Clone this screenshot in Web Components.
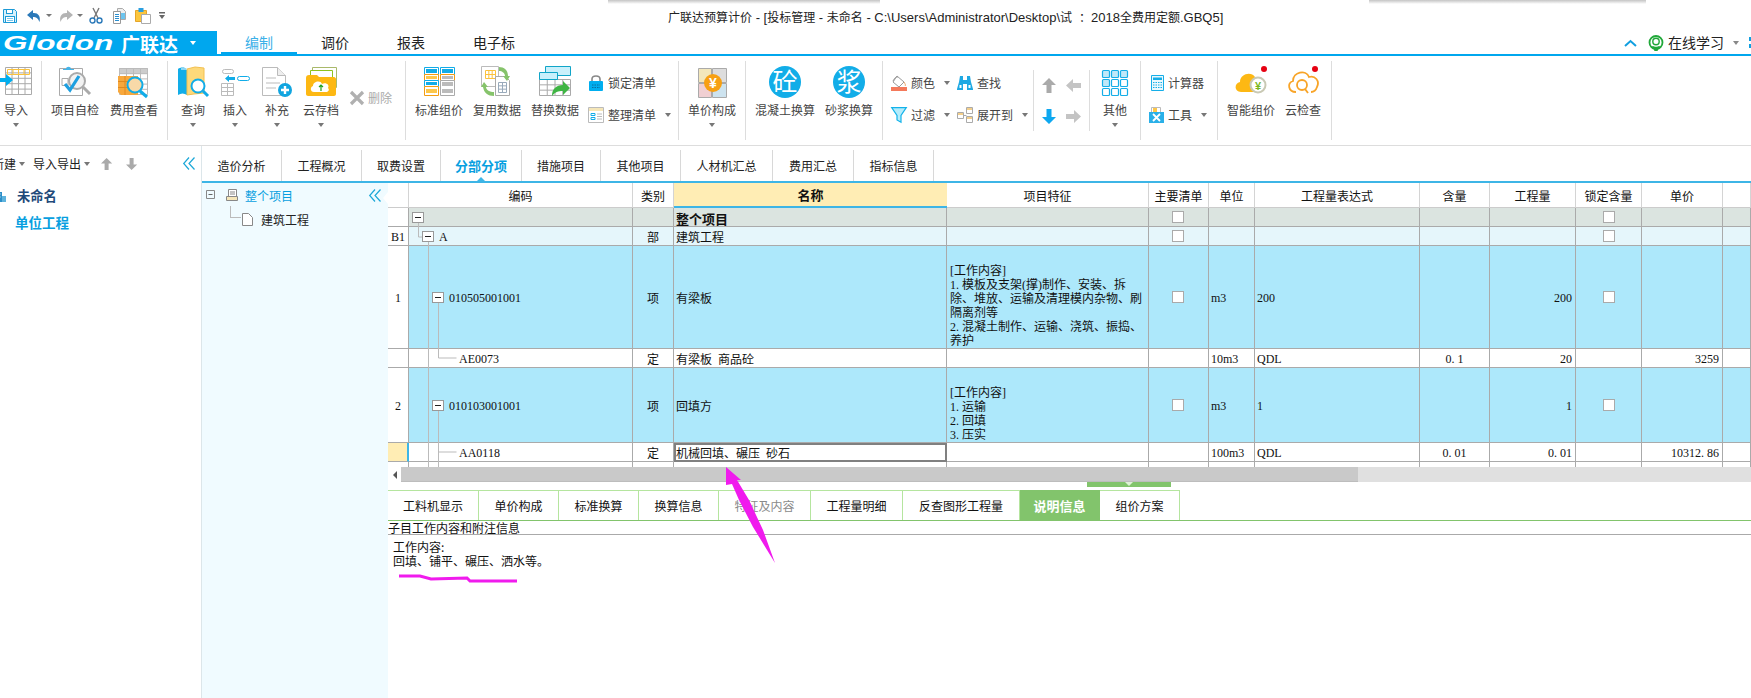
<!DOCTYPE html>
<html lang="zh-CN">
<head>
<meta charset="utf-8">
<title>广联达预算计价</title>
<style>
  html, body { margin: 0; background: #fff; }
  body { font: 12px "Liberation Sans", "Noto Sans CJK SC", sans-serif; color: #222; overflow: hidden; }
</style>
</head>
<body>
<app-shell></app-shell>

<script>
const BLUE = "#00a7ee";
const LINE_BLUE = "#3db5e6";
const SERIF = `"Liberation Serif", "Noto Sans CJK SC", serif`;

// grid of thin lines, used by most of the table icons
function gridLines(x, y, w, h, nx, ny, color) {
  let d = `M${x} ${y}h${w}v${h}h-${w}z`;
  for (let i = 1; i < nx; i++) d += `M${x + (w * i) / nx} ${y}v${h}`;
  for (let i = 1; i < ny; i++) d += `M${x} ${y + (h * i) / ny}h${w}`;
  return `<path d="${d}" fill="none" stroke="${color}"/>`;
}

const FIXED = `font-family="Liberation Sans, sans-serif" font-weight="700" text-anchor="middle"`;

const ICONS = {
  save: [16, 16, `<path d="M1.500 1.500h11l2 2v11h-13z" fill="#d6f0fb" stroke="#1c9ad6"/><rect x="4.500" y="1.500" width="6" height="4" fill="#fff" stroke="#1c9ad6"/><rect x="3.500" y="8.500" width="9" height="6" fill="#fff" stroke="#1c9ad6"/><path d="M5 10.500h6M5 12.500h6" stroke="#7cc6ea"/>`],
  undo: [14, 14, `<path d="M6 1L0 6l6 5V8c3 0 5 1 6.500 5C14 7 11 3.500 6 4z" fill="#2b79b9"/>`],
  redo: [14, 14, `<path d="M8 1l6 5-6 5V8C5 8 3 9 1.500 13 0 7 3 3.500 8 4z" fill="#b4b4b4"/>`],
  cut: [14, 16, `<path d="M4 0l5 10M10 0L5 10" stroke="#777" stroke-width="1.400" fill="none"/><circle cx="3.500" cy="12.500" r="2.500" fill="#fff" stroke="#2b79b9" stroke-width="1.400"/><circle cx="10.500" cy="12.500" r="2.500" fill="#fff" stroke="#2b79b9" stroke-width="1.400"/>`],
  copy: [16, 16, `<path d="M5.500 .5h5l3 3v8h-8z" fill="#eee" stroke="#aaa"/><path d="M1.500 3.500h7v12h-7z" fill="#fff" stroke="#999"/><path d="M3 6.500h4M3 8.500h4M3 10.500h4M3 12.500h4" stroke="#2b8fd0"/><path d="M9 5h4v6H9z" fill="#6cc4ee"/>`],
  paste: [16, 17, `<path d="M.5 3.500h11v11H.5z" fill="#fcc63d" stroke="#e5a52a"/><rect x="3.500" y="1" width="5" height="4" fill="#2b9fe0"/><path d="M6.500 7.500h9v9h-9z" fill="#fff" stroke="#aaa"/>`],
  customize: [6, 8, `<path d="M0 0h6v1.500H0zM0 3h6L3 7z" fill="#666"/>`],

  import: [32, 32, gridLines(5.5, 1.5, 26, 27, 4, 5, "#aaa") + gridLines(7.5, 3.5, 22, 5, 4, 1, "#fbc23d") + `<path d="M0 10h6V6l7 6-7 6v-4H0z" fill="#00aeef" transform="translate(0 2)"/>`],
  check: [32, 32, `<path d="M.5 2.500h23v27H.5z" fill="#fff" stroke="#aaa"/><path d="M7 3c0-3 5-3 5 0h3v1H4V3z" fill="#45b4e8"/><path d="M3 12.500h6v7H3z" fill="none" stroke="#aaa"/><circle cx="18" cy="15" r="8" fill="#f2f2f2" stroke="#aaa" stroke-width="2"/><path d="M24 21l7 7" stroke="#aaa" stroke-width="3"/><path d="M6 18l5 6 9-14" fill="none" stroke="#1d9fe0" stroke-width="3.200"/>`],
  costview: [32, 32, `<rect x="1" y="2" width="29" height="6" fill="#ccc"/>` + gridLines(1.5, 2.5, 28, 26, 4, 5, "#bbb") + `<path d="M0 10h20v19H3l-3-3z" fill="#f8a83c"/><path d="M0 15.500h20M0 21.500h20M7 10v19" stroke="#e08a20"/><circle cx="17" cy="19" r="7.500" fill="#f8d9a8" stroke="#11ace8" stroke-width="2"/><path d="M22 25l7 6" stroke="#11ace8" stroke-width="3"/>`],
  query: [32, 32, `<path d="M1 3c2-2 7-2 9 0v26c-3-2-6-2-9 0z" fill="#12ade8"/><path d="M10 3l8-2 9 1v25l-10 1-7 1z" fill="#fdd97a" stroke="#f3c04f"/><path d="M4 3h6" stroke="#fff"/><circle cx="21" cy="20" r="6.500" fill="#fff" stroke="#11ace8" stroke-width="2"/><path d="M26 25l5 5" stroke="#11ace8" stroke-width="3"/>`],
  insert: [32, 32, `<rect x="3.500" y="3.500" width="11" height="4" rx="2" fill="#fff" stroke="#bbb"/><rect x="18.500" y="10.500" width="12" height="4" rx="2" fill="#fff" stroke="#11ace8"/><path d="M6 12.500l4-3.500v2h6v3h-6v2z" fill="#11ace8"/>` + gridLines(2.5, 17.5, 12, 12, 2, 3, "#bbb")],
  supply: [32, 32, `<path d="M1.500 1.500h15l8 8v20h-23z" fill="#fff" stroke="#bbb"/><path d="M16.500 1.500v8h8" fill="#eee" stroke="#bbb"/><path d="M5 12h10M5 17h14M5 22h10" stroke="#ddd" stroke-width="2"/><circle cx="24" cy="24" r="7" fill="#11a5e0"/><path d="M20 24h8M24 20v8" stroke="#fff" stroke-width="2.400"/>`],
  cloudsave: [32, 32, `<path d="M7.500 1.500h24v20h-24z" fill="#fff" stroke="#a9b96a"/><path d="M5.500 4.500h22v20h-22z" fill="#fff" stroke="#8fc31f"/><path d="M1 12c0-2 1-3 3-3h8l2 2h15c1 0 2 1 2 2v15c0 1-1 2-2 2H3c-1 0-2-1-2-2z" fill="#fdb813"/><path d="M9 26c-4 0-4-5-1-6 0-5 8-6 9-2 4-2 8 1 6 4 2 2 0 4-2 4z" fill="#fff"/><path d="M16 19v6M14 21l2-2 2 2" fill="none" stroke="#22a022" stroke-width="1.200"/>`],
  remove: [14, 14, `<path d="M1 1l12 12M13 1L1 13" stroke="#b0b0b0" stroke-width="3.200"/>`],
  standard: [32, 32, `<path d="M1.500 1.500h14v7h-14z" fill="#fff" stroke="#11ace8"/><rect x="3" y="3" width="11" height="4" fill="#11ace8"/><path d="M1.500 8.500h14v6h-14z" fill="#fff" stroke="#f39c12"/><rect x="3" y="10" width="11" height="3" fill="#fdc74a"/><path d="M1.500 14.500h14v6h-14z" fill="#fff" stroke="#11ace8"/><rect x="3" y="16" width="11" height="3" fill="#11ace8"/><path d="M1.500 20.500h14v9h-14z" fill="#fff" stroke="#f39c12"/><rect x="3" y="23" width="11" height="4" fill="#fdc74a"/><path d="M17.500 1.500h14v7h-14z" fill="#fff" stroke="#11ace8"/><rect x="19" y="3" width="11" height="4" fill="#11ace8"/><path d="M17.500 8.500h14v6h-14z" fill="#fff" stroke="#f39c12"/><rect x="19" y="10" width="11" height="3" fill="#bbb"/><path d="M17.500 14.500h14v15h-14z" fill="#fff" stroke="#aaa"/><rect x="19" y="16" width="11" height="4" fill="#bbb"/><rect x="19" y="23" width="11" height="4" fill="#bbb"/>`],
  reuse: [32, 32, `<path d="M.5 .5h17v20H.5z" fill="#fff" stroke="#bbb"/>` + gridLines(4.5, 4.5, 10, 8, 3, 2, "#fbc23d") + `<path d="M14.500 10.500h10l4 4v15h-14z" fill="#fff" stroke="#aaa"/>` + gridLines(17.5, 16.5, 8, 10, 2, 3, "#9ab") + `<path d="M18 1c5 0 9 3 9 9h2l-3 5-4-5h2c0-3-3-5-6-5z" fill="#86c36b"/><path d="M13 30c-6 0-10-3-11-9H0l3-5 4 5H5c0 3 4 5 8 5z" fill="#86c36b"/>`],
  replace: [32, 32, gridLines(.5, 13.5, 31, 16, 4, 3, "#aaa") + `<path d="M6.500 .5h25v9h-25z" fill="#c9f0fb" stroke="#11a5c8"/><path d="M.5 6.500h18v7H.5z" fill="#c9f0fb" stroke="#11a5c8"/><path d="M13 30c0-7 4-11 11-11v-4l7 7-7 7v-4c-5 0-8 1-11 5z" fill="#3fb544"/>`],
  lock: [16, 16, `<path d="M4 7V4c0-4 8-4 8 0v3" fill="none" stroke="#888" stroke-width="1.600"/><rect x="1" y="6" width="14" height="10" rx="1" fill="#00aeef"/><path d="M4 10h8M4 12.500h8" stroke="#0a6f9e" stroke-dasharray="1.500 1"/>`],
  tidy: [16, 16, `<path d="M.5 .5h15v15H.5z" fill="#fff" stroke="#bbb"/><rect x="1" y="1" width="14" height="3" fill="#f5e6b8"/><path d="M3 6.500h4v2H3zM3 10.500h4v2H3z" fill="#fff" stroke="#11ace8"/><path d="M9 7h5M9 9.500h5M9 12h5" stroke="#bbb"/>`],
  unitprice: [32, 32, `<path d="M2.500 2.500h13v14h-13z" fill="#f3e7bb" stroke="#aaa"/><path d="M16.500 2.500h14v14h-14z" fill="#ddd" stroke="#aaa"/><path d="M2.500 17.500h13v14h-13z" fill="#f0cfd2" stroke="#aaa"/><path d="M16.500 17.500h14v14h-14z" fill="#cde3ef" stroke="#aaa"/><circle cx="17" cy="17" r="9" fill="#f7a012"/><text x="17" y="22" font-size="14" fill="#fff" ${FIXED}>¥</text>`],
  concrete: [32, 32, `<circle cx="16" cy="16" r="16" fill="#12ade8"/><text x="16" y="25" font-size="25" fill="#fff" text-anchor="middle" font-family="Noto Sans CJK SC, sans-serif">砼</text>`],
  mortar: [32, 32, `<circle cx="16" cy="16" r="16" fill="#12ade8"/><text x="16" y="25" font-size="25" fill="#fff" text-anchor="middle" font-family="Noto Sans CJK SC, sans-serif">浆</text>`],
  color: [16, 16, `<path d="M6 1l7 6-5 5-6-5z" fill="#fff" stroke="#999"/><path d="M2 6c2-4 3-4 5-4" fill="none" stroke="#999"/><path d="M13 7c1 2 2 3 1 4" fill="none" stroke="#e8a060"/><rect y="12" width="16" height="4" fill="#f4795b"/>`],
  find: [16, 16, `<path d="M3 1h3v4h4V1h3l1 6 2 7v1h-6V9H6v6H0v-1l2-7z" fill="#1fa9e3"/><path d="M2.500 10h2v3h-2zM11.500 10h2v3h-2z" fill="#fff"/>`],
  filter: [16, 16, `<path d="M.7 .7h14.600L10 8.500V15.300L6 13V8.500z" fill="#b5ecfb" stroke="#13b2ea" stroke-width="1.200"/>`],
  expand: [16, 16, `<path d="M.5 5.500h6v6h-6zM9.500 .5h6v6h-6zM9.500 9.500h6v6h-6z" fill="#fff" stroke="#aaa"/><path d="M1 6h5v2H1zM10 1h5v2h-5zM10 10h5v2h-5z" fill="#f3cf8c"/><path d="M6.500 8.500h3" stroke="#aaa"/>`],
  up: [14, 15, `<path d="M7 0l7 7H9.500v8h-5V7H0z" fill="#aaa"/>`],
  down: [14, 15, `<path d="M7 15L0 8h4.500V0h5v8H14z" fill="#0ea8f0"/>`],
  left: [15, 13, `<path d="M0 6.500L7 0v4h8v5H7v4z" fill="#c4c4c4"/>`],
  right: [15, 13, `<path d="M15 6.500L8 0v4H0v5h8v4z" fill="#c4c4c4"/>`],
  other: [32, 32, [0, 1, 2].map((r) => [0, 1, 2].map((c) => `<rect x="${3.5 + c * 9}" y="${4.5 + r * 9}" width="7" height="7" rx="1" fill="${r === 0 || (r === 1 && c === 0) ? "#bfe8f8" : "#fff"}" stroke="#15aee8" stroke-width="1.200"/>`).join("")).join("")],
  calc: [16, 16, `<path d="M3.500 .5h12v15h-12z" fill="#eaf8fd" stroke="#15aee8"/><rect x="5" y="2.500" width="9" height="2.500" fill="#15aee8"/><path d="M5 7.500h9M5 10h9M5 12.500h9" stroke="#15aee8" stroke-dasharray="1.500 1"/>`],
  tool: [16, 16, `<path d="M3.500 .5h9v6h-9z" fill="#fff" stroke="#bbb"/><rect x="5" y="1" width="4" height="4" fill="#fdc74a"/><rect x="1" y="5" width="15" height="11" fill="#2ab0e8"/><path d="M5 7l7 7M12 7l-7 7" stroke="#fff" stroke-width="1.800"/>`],
  smart: [32, 32, `<path d="M6 26c-7 0-7-9-1-10 0-8 11-11 15-5 2 0 4 1 5 2v13z" fill="#fdb813"/><circle cx="23" cy="19" r="7.500" fill="#fff" stroke="#c9c9b4" stroke-width="2"/><text x="23" y="23.500" font-size="11" fill="#7cb81e" ${FIXED}>¥</text><circle cx="29" cy="3" r="3" fill="#e60012"/>`],
  cloudcheck: [32, 32, `<path d="M9 26c-8 0-9-9-3-11 0-9 13-12 16-4 6-2 11 4 8 10-1 3-3 5-6 5" fill="none" stroke="#f8a428" stroke-width="1.800"/><circle cx="15" cy="19" r="5" fill="#fff" stroke="#f8a428" stroke-width="1.800"/><path d="M18 23l3 4" stroke="#f8a428" stroke-width="1.800"/><circle cx="28" cy="3" r="3" fill="#e60012"/>`],
  headset: [16, 16, `<circle cx="8" cy="7.500" r="6.500" fill="none" stroke="#21a83a" stroke-width="1.800"/><circle cx="8" cy="6.500" r="3.200" fill="#fff" stroke="#21a83a" stroke-width="1.400"/><path d="M3 12c2 3 8 3 10 0l-2-1c-1 1-5 1-6 0z" fill="#21a83a"/><rect x="6" y="13" width="4" height="3" rx="1" fill="#21a83a"/>`],
  chevup: [11, 6, `<path d="M0 6l5.500-5L11 6" fill="none" stroke="#119fe0" stroke-width="2"/>`],
  collapse: [12, 13, `<path d="M6 .5L.7 6.500 6 12.500M11.500 .5L6 6.500l5.500 6" fill="none" stroke="#1da8d8" stroke-width="1.200"/>`],
  doc: [11, 13, `<path d="M.5 .5h6l4 4v8H.5z" fill="#fff" stroke="#888"/>`],
  pages: [12, 12, `<path d="M2.500 .5h8v10h-8z" fill="#fff" stroke="#888"/><path d="M.5 7.500h11v4H.5z" fill="#f5e6b8" stroke="#888"/><path d="M4 3h5M4 5h5" stroke="#888"/>`],
  building: [12, 13, `<path d="M0 3h7v10H0z" fill="#2b8fc9"/><path d="M1 5h1.500M4 5h1.500M1 8h1.500M4 8h1.500" stroke="#fff"/><path d="M7 7h4v6H7z" fill="#5fb3dd"/>`],
  minibox: [10, 10, `<path d="M.5 .5h8v8H.5z" fill="none" stroke="#888"/><path d="M2.500 4.500h4" stroke="#666"/>`],
};

class GlIcon extends HTMLElement {
  connectedCallback() {
    const [w, h, body] = ICONS[this.getAttribute("name")];
    const scale = this.getAttribute("scale") || 1;
    this.attachShadow({ mode: "open" }).innerHTML = `
      <style>:host { display: block; flex: none; line-height: 0; } svg { overflow: visible; }</style>
      <svg width="${w * scale}" height="${h * scale}" viewBox="0 0 ${w} ${h}">${body}</svg>`;
  }
}
customElements.define("gl-icon", GlIcon);

class TitleBar extends HTMLElement {
  constructor() {
    super();
    const items = [["save", 2], ["undo", 9], ["dd", 5], ["redo", 7], ["dd", 4], ["cut", 6], ["copy", 9], ["paste", 7], ["customize", 8]];
    const title = "广联达预算计价 - [投标管理 - 未命名 - C:\\Users\\Administrator\\Desktop\\试：2018全费用定额.GBQ5]";
    const marked = title.replace(/[\x20-\x7e]+/g, "<span>$&</span>").replace("：", "<b>：</b>");
    this.attachShadow({ mode: "open" }).innerHTML = `
      <style>
        :host { display: flex; height: 31px; align-items: center; background: #fff; }
        .quick { display: flex; align-items: center; width: 668px; height: 27px; }
        .dd { width: 0; height: 0; border: 3px solid transparent; border-top: 3px solid #777; border-bottom: 0; }
        .title { font: 12px "Liberation Sans", "Noto Sans CJK SC", sans-serif; color: #222; padding-top: 1px; white-space: pre; }
        .title span { font-size: 13px; }
        .title b { font-weight: 400; padding-left: 7px; }
      </style>
      <div class="quick">${items.map(([n, m]) => n === "dd"
        ? `<span class="dd" style="margin-left:${m}px"></span>`
        : `<gl-icon name="${n}" style="margin-left:${m}px"></gl-icon>`).join("")}</div>
      <div class="title">${marked}</div>`;
  }
}
customElements.define("title-bar", TitleBar);

class MenuBar extends HTMLElement {
  constructor() {
    super();
    const tabs = [["编制", 76], ["调价", 76], ["报表", 76], ["电子标", 90]];
    this.attachShadow({ mode: "open" }).innerHTML = `
      <style>
        :host { display: flex; height: 25px; box-sizing: border-box; border-bottom: 2px solid ${BLUE}; font: 14px "Noto Sans CJK SC", sans-serif; color: #222; }
        .logo { width: 217px; background: ${BLUE}; display: flex; align-items: center; color: #fff; margin-right: 4px; height: 24px; }
        .g { font: italic 700 21px "Liberation Sans", sans-serif; width: 121px; padding-left: 3px; box-sizing: border-box; }
        .g span { display: inline-block; transform: scaleX(1.5); transform-origin: 0 50%; }
        .cn { font: 700 19px/23px "Noto Sans CJK SC", sans-serif; width: 69px; white-space: nowrap; }
        .tri { width: 0; height: 0; border: 3px solid transparent; border-top: 4px solid #fff; border-bottom: 0; }
        .tab { text-align: center; line-height: 23px; box-sizing: border-box; }
        .tab.on { color: #3bb0e8; border-bottom: 2px solid ${BLUE}; }
        .right { margin-left: auto; display: flex; align-items: center; width: 126px; flex: none; }
        .learn { margin-left: 4px; white-space: nowrap; line-height: 23px; }
        .dd { width: 0; height: 0; border: 3px solid transparent; border-top: 4px solid #888; border-bottom: 0; margin-left: 9px; }
        .sq { width: 3px; height: 11px; margin-left: 10px; background: linear-gradient(#119fe0 0 4px, #fff 4px 7px, #119fe0 7px); flex: none; }
      </style>
      <div class="logo"><div class="g"><span>Glodon</span></div><div class="cn">广联达</div><span class="tri"></span></div>
      ${tabs.map(([t, w], i) => `<div class="tab ${i === 0 ? "on" : ""}" style="width:${w}px">${t}</div>`).join("")}
      <div class="right">
        <gl-icon name="chevup"></gl-icon>
        <gl-icon name="headset" style="margin-left:12px"></gl-icon>
        <span class="learn">在线学习</span><span class="dd"></span><span class="sq"></span>
      </div>`;
  }
}
customElements.define("menu-bar", MenuBar);

class RibbonBar extends HTMLElement {
  constructor() {
    super();
    this.attachShadow({ mode: "open" }).innerHTML = `
      <style>:host { display: flex; height: 90px; box-sizing: border-box; border-bottom: 1px solid #ddd; background: #fff; }</style>
      <slot></slot>`;
  }
}
customElements.define("ribbon-bar", RibbonBar);

class RbGroup extends HTMLElement {
  constructor() {
    super();
    this.attachShadow({ mode: "open" }).innerHTML = `
      <style>
        :host { display: flex; flex: none; box-sizing: border-box; height: 79px; margin-top: 5px; padding-top: 5px; border-right: 1px solid #ddd; align-items: flex-start; }
      </style>
      <slot></slot>`;
  }
}
customElements.define("rb-group", RbGroup);

class RbBig extends HTMLElement {
  connectedCallback() {
    const arrow = this.hasAttribute("arrow");
    this.attachShadow({ mode: "open" }).innerHTML = `
      <style>
        :host { display: flex; flex: none; flex-direction: column; align-items: center; width: ${this.getAttribute("w") || 58}px; color: #444; font: 12px "Noto Sans CJK SC", sans-serif; }
        .ic { height: 32px; width: 32px; }
        .lb { line-height: 16px; margin-top: 4px; white-space: nowrap; }
        .dd { width: 0; height: 0; border: 3px solid transparent; border-top: 4px solid #777; border-bottom: 0; margin-top: 5px; }
      </style>
      <div class="ic"><slot></slot></div>
      <div class="lb">${this.getAttribute("label")}</div>
      ${arrow ? `<span class="dd"></span>` : ""}`;
  }
}
customElements.define("rb-big", RbBig);

class RbSmall extends HTMLElement {
  connectedCallback() {
    const off = this.hasAttribute("disabled");
    this.attachShadow({ mode: "open" }).innerHTML = `
      <style>
        :host { display: flex; flex: none; align-items: center; height: 32px; color: ${off ? "#aaa" : "#444"}; font: 12px "Noto Sans CJK SC", sans-serif; }
        .ic { width: ${this.getAttribute("iw") || 16}px; margin-right: 4px; flex: none; }
        .lb { white-space: nowrap; margin-top: -2px; }
        .dd { width: 0; height: 0; border: 3px solid transparent; border-top: 4px solid #777; border-bottom: 0; margin-left: 9px; }
      </style>
      <div class="ic"><slot></slot></div>
      <span class="lb">${this.getAttribute("label")}</span>
      ${this.hasAttribute("arrow") ? `<span class="dd"></span>` : ""}`;
  }
}
customElements.define("rb-small", RbSmall);

class RbCol extends HTMLElement {
  constructor() {
    super();
    this.attachShadow({ mode: "open" }).innerHTML = `
      <style>:host { display: flex; flex: none; flex-direction: column; margin-top: 1px; box-sizing: border-box; }</style>
      <slot></slot>`;
  }
}
customElements.define("rb-col", RbCol);

class RbNudge extends HTMLElement {
  constructor() {
    super();
    this.attachShadow({ mode: "open" }).innerHTML = `
      <style>
        :host { display: grid; flex: none; grid-template-columns: 24px 15px; grid-template-rows: 31px 31px; width: 57px; height: 61px; margin-top: 4px; box-sizing: border-box; padding-left: 8px; border-left: 1px solid #ddd; border-right: 1px solid #ddd; align-items: center; }
      </style>
      <slot></slot>`;
  }
}
customElements.define("rb-nudge", RbNudge);

class LeftPane extends HTMLElement {
  constructor() {
    super();
    this.attachShadow({ mode: "open" }).innerHTML = `
      <style>
        :host { display: block; width: 202px; flex: none; box-sizing: border-box; border-right: 1px solid #dce6ea; font: 12px "Noto Sans CJK SC", sans-serif; color: #222; overflow: hidden; }
        .bar { display: flex; align-items: center; height: 35px; white-space: nowrap; margin-left: -8px; }
        .dd { width: 0; height: 0; border: 3px solid transparent; border-top: 4px solid #777; border-bottom: 0; margin: 0 0 0 3px; }
        .mid { margin-left: 8px; }
        .tree { font-weight: 700; }
        .proj { display: flex; align-items: center; height: 22px; margin-top: 3px; color: #1f4a7a; font-size: 13.300px; }
        .proj span { margin-left: 10px; letter-spacing: -.1px; }
        .unit { height: 22px; line-height: 22px; margin-top: 5px; padding-left: 15px; color: #089fe0; font-size: 13.500px; }
      </style>
      <div class="bar">
        <span>新建</span><span class="dd"></span><span class="mid">导入导出</span><span class="dd"></span>
        <gl-icon name="up" scale=".8" style="margin-left:11px"></gl-icon>
        <gl-icon name="up" scale=".8" style="margin-left:14px;transform:rotate(180deg)"></gl-icon>
        <gl-icon name="collapse" style="margin-left:46px"></gl-icon>
      </div>
      <div class="tree">
        <div class="proj"><gl-icon name="building" style="margin-left:-5px"></gl-icon><span>未命名</span></div>
        <div class="unit">单位工程</div>
      </div>`;
  }
}
customElements.define("left-pane", LeftPane);

class TabStrip extends HTMLElement {
  constructor() {
    super();
    const tabs = [["造价分析", 80], ["工程概况", 80], ["取费设置", 79], ["分部分项", 81], ["措施项目", 79], ["其他项目", 80], ["人材机汇总", 92], ["费用汇总", 81], ["指标信息", 80]];
    this.attachShadow({ mode: "open" }).innerHTML = `
      <style>
        :host { display: flex; height: 37px; box-sizing: border-box; border-bottom: 2px solid ${LINE_BLUE}; align-items: flex-end; font: 12px "Noto Sans CJK SC", sans-serif; color: #222; }
        .t { height: 31px; line-height: 31px; text-align: center; box-sizing: border-box; border-right: 1px solid #d8d8d8; position: relative; white-space: nowrap; }
        .t.on { color: #089fe0; font-weight: 700; font-size: 13px; }
        .t.on::after { content: ""; position: absolute; left: 50%; bottom: 0; margin-left: -4px; border: 4px solid transparent; border-bottom: 4px solid ${LINE_BLUE}; border-top: 0; }
      </style>
      ${tabs.map(([t, w]) => `<div class="t ${t === "分部分项" ? "on" : ""}" style="width:${w}px">${t}</div>`).join("")}`;
  }
}
customElements.define("tab-strip", TabStrip);

class ProjectTree extends HTMLElement {
  constructor() {
    super();
    this.attachShadow({ mode: "open" }).innerHTML = `
      <style>
        :host { display: block; position: relative; width: 186px; flex: none; background: #f0fbff; font: 12px "Noto Sans CJK SC", sans-serif; color: #222; box-sizing: border-box; }
        .r { display: flex; align-items: center; height: 24px; }
        .root { color: #089fe0; margin-left: 7px; }
        .kid { margin-left: 8px; }
        .elbow { width: 10px; height: 11px; margin: -14px 0 0 28px; border-left: 1px solid #bbb; border-bottom: 1px solid #bbb; flex: none; }
        .notch { position: absolute; right: 0; top: 9px; width: 0; height: 0; border: 6px solid transparent; border-right: 5px solid #fff; border-left: 0; }
      </style>
      <div class="r">
        <gl-icon name="minibox" style="margin-left:4px"></gl-icon>
        <gl-icon name="pages" style="margin-left:10px"></gl-icon>
        <span class="root">整个项目</span>
        <gl-icon name="collapse" style="margin-left:76px"></gl-icon>
      </div>
      <div class="r">
        <span class="elbow"></span>
        <gl-icon name="doc" style="margin-left:1px"></gl-icon>
        <span class="kid">建筑工程</span>
      </div>
      <span class="notch"></span>`;
  }
}
customElements.define("project-tree", ProjectTree);

// column widths and row colours come from the measured screenshot
const COLS = [21, 224, 41, 273, 202, 60, 46, 165, 70, 86, 66, 81, 28];
const HEAD = ["", "编码", "类别", "名称", "项目特征", "主要清单", "单位", "工程量表达式", "含量", "工程量", "锁定含量", "单价", ""];
const WIDE = (s) => s.replace(/\./g, "<i>.</i>");
const FEAT1 = ["[工作内容]", "1.模板及支架(撑)制作、安装、拆", "除、堆放、运输及清理模内杂物、刷", "隔离剂等", "2.混凝土制作、运输、浇筑、振捣、", "养护"];
const FEAT2 = ["[工作内容]", "1.运输", "2.回填", "3.压实"];
const ROWS = [
  { h: 19, bg: "#dbe4e0", box: 3, chk: true, name: "<b>整个项目</b>" },
  { h: 19, bg: "#e5f6fb", no: "B1", box: 13, code: "A", type: "部", name: "建筑工程", chk: true },
  { h: 103, bg: "#ade8fb", no: "1", box: 23, code: "010505001001", type: "项", name: "有梁板", feat: FEAT1, chk: true, unit: "m3", expr: "200", qty: "200" },
  { h: 19, bg: "#fff", leaf: true, code: "AE0073", type: "定", name: "有梁板 商品砼", unit: "10m3", expr: "QDL", ratio: "0.1", qty: "20", price: "3259" },
  { h: 75, bg: "#ade8fb", no: "2", box: 23, code: "010103001001", type: "项", name: "回填方", feat: FEAT2, chk: true, unit: "m3", expr: "1", qty: "1" },
  { h: 19, bg: "#fff", leaf: true, active: true, code: "AA0118", type: "定", name: "机械回填、碾压 砂石", unit: "100m3", expr: "QDL", ratio: "0.01", qty: "0.01", price: "10312.86" },
];

class DataGrid extends HTMLElement {
  constructor() {
    super();
    const chk = (on, extra) => (on ? `<span class="chk" style="${extra || ""}"></span>` : "");
    const head = HEAD.map((t, i) => `<div class="hd ${i === 3 ? "sel" : ""}">${t}</div>`).join("");
    const body = ROWS.map((r) => {
      const cell = (cls, html, css) => `<div class="c ${cls}" style="background:${r.bg};${css || ""}">${html || ""}</div>`;
      const code = r.leaf
        ? `<span style="padding-left:50px">${r.code}</span>`
        : `<span class="box" style="margin-left:${r.box}px"></span><span class="tx">${r.code || ""}</span>`;
      return [
        cell("mid", r.no, r.active ? `background:#ffedb4;border-right:2px solid ${LINE_BLUE}` : "background:#fff"),
        cell("", code),
        cell("mid", r.type),
        cell(`name ${r.active ? "act" : ""}`, r.name),
        cell("feat", r.feat ? `<div>${r.feat.map(WIDE).join("<br>")}</div>` : ""),
        cell("mid", chk(r.chk, "margin-right:2px")),
        cell("pad", r.unit),
        cell("pad", r.expr),
        cell("mid", WIDE(r.ratio || "")),
        cell("rt", WIDE(r.qty || "")),
        cell("mid", chk(r.chk)),
        cell("rt", WIDE(r.price || "")),
        cell("", ""),
      ].join("");
    }).join("");
    const tail = COLS.map(() => `<div class="c tail"></div>`).join("");
    const rows = [25, ...ROWS.map((r) => r.h), 5].map((h) => h + "px").join(" ");
    // tree connectors, coordinates are local to the grid
    const lines = "M30.500 40v14h4M40.500 59V284M50.500 120v55h18M50.500 228v56M50.500 269h18";
    this.attachShadow({ mode: "open" }).innerHTML = `
      <style>
        :host { display: grid; position: relative; grid-template-columns: ${COLS.map((c) => c + "px").join(" ")}; grid-template-rows: ${rows}; font: 12px ${SERIF}; color: #111; background: #fff; }
        .hd { display: flex; align-items: center; justify-content: center; box-sizing: border-box; border-right: 1px solid #d4d4d4; border-bottom: 1px solid #ccc; font-family: "Noto Sans CJK SC", sans-serif; white-space: nowrap; }
        .hd.sel { background: #ffedb4; font-weight: 700; font-size: 13px; border-bottom: 2px solid ${LINE_BLUE}; border-right: 0; }
        .c { display: flex; align-items: center; box-sizing: border-box; padding-top: 2px; border-right: 1px solid #aaa; border-bottom: 1px solid #aaa; white-space: nowrap; overflow: hidden; min-width: 0; }
        .c.tail { background: #fff; border-bottom: 0; padding: 0; }
        .mid { justify-content: center; }
        .rt { justify-content: flex-end; padding-right: 3px; }
        .pad { padding-left: 2px; }
        .name { padding-left: 2px; word-spacing: 3px; }
        .name.act { outline: 2px solid #808080; outline-offset: -2px; position: relative; }
        .feat { align-items: flex-end; padding-left: 3px; padding-top: 0; line-height: 14px; }
        .chk { width: 12px; height: 12px; margin-top: -2px; box-sizing: border-box; background: #fff; border: 1px solid #aaa; }
        .box { width: 12px; height: 11px; margin-top: -2px; box-sizing: border-box; background: #fff; border: 1px solid #999; position: relative; flex: none; z-index: 1; }
        .box::after { content: ""; position: absolute; left: 2px; right: 2px; top: 4px; height: 1px; background: #222; }
        .tx { margin-left: 5px; }
        b { font-family: "Noto Sans CJK SC", sans-serif; font-size: 13px; }
        i { font-style: normal; letter-spacing: 3px; }
        svg { position: absolute; left: 0; top: 0; pointer-events: none; }
      </style>
      ${head}${body}${tail}
      <svg width="200" height="284"><path d="${lines}" fill="none" stroke="#bbb"/></svg>`;
  }
}
customElements.define("data-grid", DataGrid);

class HScroll extends HTMLElement {
  constructor() {
    super();
    this.attachShadow({ mode: "open" }).innerHTML = `
      <style>
        :host { display: flex; height: 15px; background: #e0e0e0; }
        .btn { width: 13px; background: #fff; display: flex; align-items: center; justify-content: center; }
        .btn i { width: 0; height: 0; border: 4px solid transparent; border-right: 4px solid #555; border-left: 0; }
        .thumb { width: 957px; background: #c9c9c9; border-bottom: 1px solid #bdbdbd; box-sizing: border-box; }
      </style>
      <div class="btn"><i></i></div><div class="thumb"></div>`;
  }
}
customElements.define("h-scroll", HScroll);

class DetailPanel extends HTMLElement {
  constructor() {
    super();
    const tabs = [["工料机显示", 91], ["单价构成", 80], ["标准换算", 80], ["换算信息", 80], ["特征及内容", 92], ["工程量明细", 92], ["反查图形工程量", 117], ["说明信息", 80], ["组价方案", 80]];
    this.attachShadow({ mode: "open" }).innerHTML = `
      <style>
        :host { display: block; font: 12px "Noto Sans CJK SC", sans-serif; color: #111; }
        .grip { height: 8px; padding-left: 699px; }
        .grip div { width: 84px; height: 5px; background: #82c46c; display: flex; justify-content: center; }
        .grip i { width: 0; height: 0; border: 4px solid transparent; border-top: 4px solid #dff2d6; border-bottom: 0; }
        .tabs { display: flex; height: 31px; box-sizing: border-box; border-bottom: 1px solid #82c46c; }
        .t { text-align: center; line-height: 30px; box-sizing: border-box; border-top: 1px solid #b5e59f; border-right: 1px solid #b5e59f; white-space: nowrap; }
        .t.off { color: #8a8a8a; }
        .t.on { background: #82c46c; color: #fff; font-weight: 700; font-size: 13px; border-color: #82c46c; }
        .cap { height: 14px; line-height: 13px; box-sizing: border-box; border-bottom: 1px solid #aaa; white-space: nowrap; }
        .txt { padding: 5px 0 0 5px; line-height: 14px; }
      </style>
      <div class="grip"><div><i></i></div></div>
      <div class="tabs">${tabs.map(([t, w]) => `<div class="t ${t === "说明信息" ? "on" : t === "特征及内容" ? "off" : ""}" style="width:${w}px">${t}</div>`).join("")}</div>
      <div class="cap">子目工作内容和附注信息</div>
      <div class="txt">工作内容:<br>回填、铺平、碾压、洒水等。</div>`;
  }
}
customElements.define("detail-panel", DetailPanel);

class AppShell extends HTMLElement {
  constructor() {
    super();
    this.attachShadow({ mode: "open" }).innerHTML = `
      <style>
        :host { display: flex; flex-direction: column; position: relative; width: 1751px; height: 698px; overflow: hidden; background: #fff; }
        .main { display: flex; flex: 1; min-height: 0; }
        .work { flex: 1; min-width: 0; display: flex; flex-direction: column; }
        .split { display: flex; flex: 1; min-height: 0; }
        .sheet { flex: 1; min-width: 0; display: flex; flex-direction: column; border-left: 1px solid #d0d8da; margin-left: -1px; }
        .ink { position: absolute; left: 0; top: 0; pointer-events: none; }
      </style>
      <title-bar></title-bar>
      <menu-bar></menu-bar>
      <ribbon-bar>
        <rb-group style="width:42px"><rb-big w="32" label="导入" arrow><gl-icon name="import"></gl-icon></rb-big></rb-group>
        <rb-group style="width:126px;padding-left:3.500px">
          <rb-big w="59" label="项目自检"><gl-icon name="check"></gl-icon></rb-big>
          <rb-big w="59" label="费用查看"><gl-icon name="costview"></gl-icon></rb-big>
        </rb-group>
        <rb-group style="width:238px;padding-left:4px">
          <rb-big w="42" label="查询" arrow><gl-icon name="query"></gl-icon></rb-big>
          <rb-big w="42" label="插入" arrow><gl-icon name="insert"></gl-icon></rb-big>
          <rb-big w="42" label="补充" arrow><gl-icon name="supply"></gl-icon></rb-big>
          <rb-big w="46" label="云存档" arrow><gl-icon name="cloudsave"></gl-icon></rb-big>
          <rb-small iw="14" label="删除" disabled style="margin:16px 0 0 6px"><gl-icon name="remove"></gl-icon></rb-small>
        </rb-group>
        <rb-group style="width:273px;padding-left:4px">
          <rb-big label="标准组价"><gl-icon name="standard"></gl-icon></rb-big>
          <rb-big label="复用数据"><gl-icon name="reuse"></gl-icon></rb-big>
          <rb-big label="替换数据"><gl-icon name="replace"></gl-icon></rb-big>
          <rb-col style="margin-left:4px">
            <rb-small label="锁定清单"><gl-icon name="lock"></gl-icon></rb-small>
            <rb-small label="整理清单" arrow><gl-icon name="tidy"></gl-icon></rb-small>
          </rb-col>
        </rb-group>
        <rb-group style="width:67px"><rb-big w="66" label="单价构成" arrow><gl-icon name="unitprice"></gl-icon></rb-big></rb-group>
        <rb-group style="width:137px;padding-left:7px">
          <rb-big w="64" label="混凝土换算"><gl-icon name="concrete"></gl-icon></rb-big>
          <rb-big w="64" label="砂浆换算"><gl-icon name="mortar"></gl-icon></rb-big>
        </rb-group>
        <rb-group style="width:258px;padding-left:8px">
          <rb-col style="width:66px">
            <rb-small label="颜色" arrow><gl-icon name="color"></gl-icon></rb-small>
            <rb-small label="过滤" arrow><gl-icon name="filter"></gl-icon></rb-small>
          </rb-col>
          <rb-col style="width:76px">
            <rb-small label="查找"><gl-icon name="find"></gl-icon></rb-small>
            <rb-small label="展开到" arrow><gl-icon name="expand"></gl-icon></rb-small>
          </rb-col>
          <rb-nudge>
            <gl-icon name="up"></gl-icon><gl-icon name="left"></gl-icon>
            <gl-icon name="down"></gl-icon><gl-icon name="right"></gl-icon>
          </rb-nudge>
          <rb-big w="50" label="其他" arrow><gl-icon name="other"></gl-icon></rb-big>
        </rb-group>
        <rb-group style="width:77px;padding-left:7px">
          <rb-col>
            <rb-small label="计算器"><gl-icon name="calc"></gl-icon></rb-small>
            <rb-small label="工具" arrow><gl-icon name="tool"></gl-icon></rb-small>
          </rb-col>
        </rb-group>
        <rb-group style="width:114px;padding-left:5px">
          <rb-big w="56" label="智能组价"><gl-icon name="smart"></gl-icon></rb-big>
          <rb-big w="48" label="云检查"><gl-icon name="cloudcheck"></gl-icon></rb-big>
        </rb-group>
      </ribbon-bar>
      <div class="main">
        <left-pane></left-pane>
        <div class="work">
          <tab-strip></tab-strip>
          <div class="split">
            <project-tree></project-tree>
            <div class="sheet">
              <data-grid></data-grid>
              <h-scroll></h-scroll>
              <detail-panel></detail-panel>
            </div>
          </div>
        </div>
      </div>
      <!-- hand drawn annotation on the screenshot and shadows of windows above -->
      <svg class="ink" width="1751" height="698">
        <defs><linearGradient id="sh" x1="0" y1="0" x2="0" y2="1"><stop offset="0" stop-color="#c4c4c4"/><stop offset="1" stop-color="#fff"/></linearGradient></defs>
        <rect x="608" y="0" width="272" height="4" fill="url(#sh)"/>
        <rect x="1369" y="0" width="277" height="4" fill="url(#sh)"/>
        <polygon points="726,467 741,480 737,480 749,500 763,530 775,563 753,527 739,500 732,484 726,485" fill="#f01bed"/>
        <polyline points="399,576 420,576 431,579 467,578 470,581 517,581" fill="none" stroke="#f01bed" stroke-width="3"/>
      </svg>`;
  }
}
customElements.define("app-shell", AppShell);
</script>
</body>
</html>
